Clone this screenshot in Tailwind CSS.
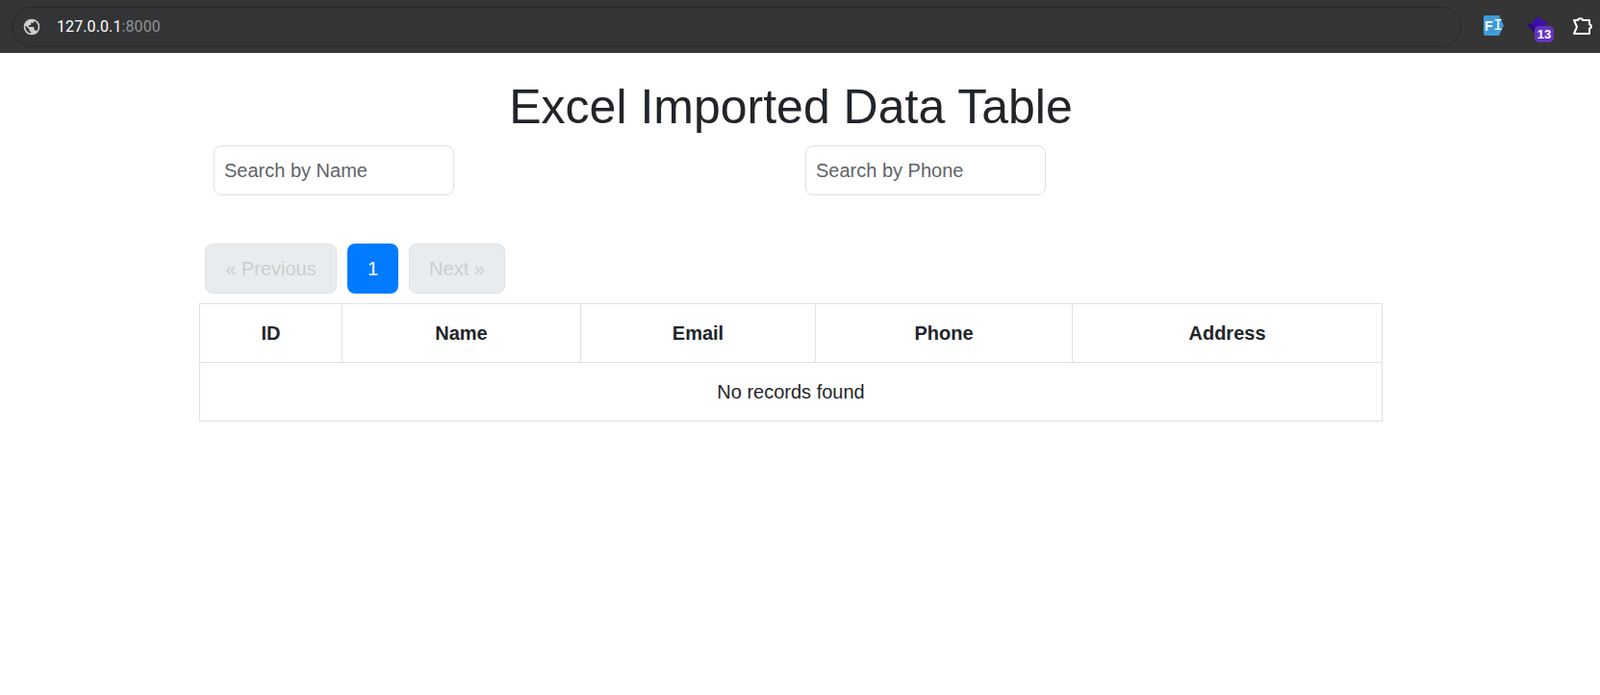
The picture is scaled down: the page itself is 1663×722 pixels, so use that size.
<!DOCTYPE html>
<html lang="en">
<head>
    <meta charset="UTF-8">
    <title>Excel Imported Data Table</title>
    <script src="https://cdn.jsdelivr.net/npm/@tailwindcss/browser@4"></script>
</head>
<body class="bg-white font-['Liberation_Sans',sans-serif] text-[#212529] h-[722px] overflow-hidden">

<!-- Browser bar -->
<div class="flex items-center h-[55px] bg-[#353535] pl-3">
    <div class="flex items-center w-[1507px] h-[42px] bg-[#333436] border border-[#29292b] rounded-full pl-[10px]">
        <svg class="w-[20px] h-[20px]" viewBox="0 0 24 24" fill="#cfcfcf">
            <path d="M12 2a10 10 0 1 0 0 20 10 10 0 0 0 0-20zm-1 17.900A8 8 0 0 1 4.200 10.200L9 15v1c0 1.100.9 2 2 2v1.900zm6.900-2.500A2 2 0 0 0 16 16h-1v-3c0-.6-.4-1-1-1H8v-2h2c.6 0 1-.4 1-1V7h2c1.100 0 2-.9 2-2v-.4a8 8 0 0 1 2.900 12.800z"/>
        </svg>
        <span class="ml-[16px] font-['Roboto',sans-serif] text-[16px] tracking-[0.1px] text-white">127.0.0.1<span class="text-[#8f9194]">:8000</span></span>
    </div>

    <!-- Extensions -->
    <div class="relative w-[21px] h-[21px] ml-[23px] -mt-[2px]">
        <svg class="absolute inset-0 w-[21px] h-[21px]" viewBox="0 0 21 21" fill="#3f9bdc">
            <path d="M2 0h14l5 10.500-5 10.500H2a2 2 0 0 1-2-2V2a2 2 0 0 1 2-2z"/>
        </svg>
        <span class="absolute left-[1px] top-[4px] text-white text-[14px] font-bold leading-none">F</span>
        <span class="absolute left-[10px] top-[2px] font-['Liberation_Mono',monospace] text-white text-[17px] leading-none">I</span>
    </div>
    <div class="relative w-[28px] h-[28px] ml-[24px] mt-[6px]">
        <svg class="absolute left-0 top-0 w-[23px] h-[18px]" viewBox="0 0 23 18" fill="#3c0fa8">
            <path d="M11 0 22 7 11 13 4 9z"/>
            <path d="M0 9 3 7 11 14 8 17z" fill="#2b0c7c"/>
        </svg>
        <span class="absolute left-[8px] top-[10px] w-[20px] h-[17px] bg-[#6534c0] rounded-[5px] flex items-center justify-center text-white text-[13px] font-bold leading-none">13</span>
    </div>
    <svg class="ml-[18px] -mt-[2px] w-[22px] h-[22px]" viewBox="0 0 22 22" fill="none" stroke="white" stroke-width="2" stroke-linejoin="round">
        <path d="M3 5H7C7 2.500 12 2.500 12 5H19V9.500C21.500 9.500 21.500 13.500 19 13.500V19H3L6 12Z"/>
    </svg>
</div>

<!-- Page content -->
<div class="w-[1230px] ml-[207px]">
    <h1 class="mt-[26px] text-center text-[50px] leading-[60px] font-normal">Excel Imported Data Table</h1>

    <div class="grid grid-cols-2 mt-[10px]">
        <div class="pl-[15px]">
            <input type="text" placeholder="Search by Name" class="block w-[250px] h-[52px] px-[10px] text-[20px] border border-[#dee2e6] rounded-lg placeholder:text-[#5f6368]">
        </div>
        <div class="pl-[15px]">
            <input type="text" placeholder="Search by Phone" class="block w-[250px] h-[52px] px-[10px] text-[20px] border border-[#dee2e6] rounded-lg placeholder:text-[#5f6368]">
        </div>
    </div>

    <!-- Pagination -->
    <div class="flex gap-[11px] ml-[6px] mt-[50px] text-[20px]">
        <a class="flex items-center justify-center w-[137px] h-[52px] bg-[#e9ecef] border border-[#dee2e6] rounded-lg text-[#cccccc]">« Previous</a>
        <a class="flex items-center justify-center w-[53px] h-[52px] bg-[#007bff] rounded-lg text-white">1</a>
        <a class="flex items-center justify-center w-[100px] h-[52px] bg-[#e9ecef] border border-[#dee2e6] rounded-lg text-[#cccccc]">Next »</a>
    </div>

    <table class="w-full mt-[10px] border-collapse table-fixed text-[20px] text-center">
        <thead>
            <tr class="h-[61px]">
                <th class="w-[148px] border border-[#dee2e6] font-bold">ID</th>
                <th class="w-[248px] border border-[#dee2e6] font-bold">Name</th>
                <th class="w-[244px] border border-[#dee2e6] font-bold">Email</th>
                <th class="w-[267px] border border-[#dee2e6] font-bold">Phone</th>
                <th class="border border-[#dee2e6] font-bold">Address</th>
            </tr>
        </thead>
        <tbody>
            <tr class="h-[61px]">
                <td colspan="5" class="border border-[#dee2e6]">No records found</td>
            </tr>
        </tbody>
    </table>
</div>

</body>
</html>
